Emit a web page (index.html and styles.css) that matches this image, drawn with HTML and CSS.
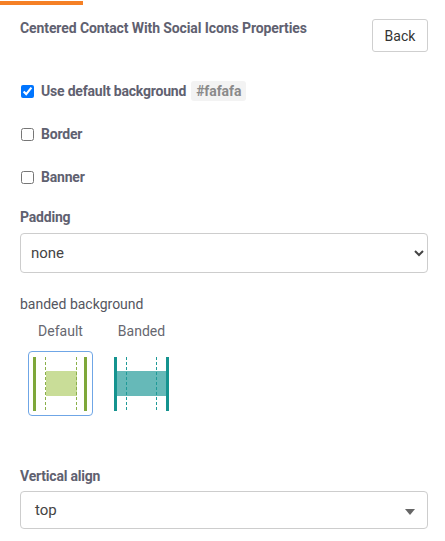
FILE: index.html
```html
<!DOCTYPE html>
<html>
<head>
<meta charset="utf-8">
<link rel="stylesheet" href="styles.css">
</head>
<body>
<div class="accent"></div>
<div class="panel">
  <div class="header">
    <div class="title">Centered Contact With Social Icons Properties</div>
    <button class="back">Back</button>
  </div>

  <label class="check first"><input type="checkbox" checked><span>Use default background</span><code class="chip">#fafafa</code></label>
  <label class="check"><input type="checkbox"><span>Border</span></label>
  <label class="check"><input type="checkbox"><span>Banner</span></label>

  <div class="field-label pad-label">Padding</div>
  <select class="native">
    <option>none</option>
  </select>

  <div class="plain-label">banded background</div>
  <div class="options">
    <div class="option">
      <div class="opt-name">Default</div>
      <div class="opt-box selected">
        <svg width="63" height="63" viewBox="0 0 63 63">
          <rect x="17" y="19" width="31" height="25" fill="#c9dd98"/>
          <rect x="4" y="5" width="3" height="54" fill="#7ea73a"/>
          <rect x="55" y="5" width="3" height="54" fill="#7ea73a"/>
          <line x1="16.5" y1="5" x2="16.5" y2="59" stroke="#8bb04a" stroke-width="1" stroke-dasharray="3 2"/>
          <line x1="47.5" y1="5" x2="47.5" y2="59" stroke="#8bb04a" stroke-width="1" stroke-dasharray="3 2"/>
        </svg>
      </div>
    </div>
    <div class="option">
      <div class="opt-name">Banded</div>
      <div class="opt-box">
        <svg width="63" height="63" viewBox="0 0 63 63">
          <rect x="7" y="19" width="49" height="25" fill="#66b9b8"/>
          <rect x="4" y="5" width="3" height="54" fill="#14938f"/>
          <rect x="56" y="5" width="3" height="54" fill="#14938f"/>
          <line x1="16.5" y1="5" x2="16.5" y2="59" stroke="#1f9a97" stroke-width="1" stroke-dasharray="3 2"/>
          <line x1="46.5" y1="5" x2="46.5" y2="59" stroke="#1f9a97" stroke-width="1" stroke-dasharray="3 2"/>
        </svg>
      </div>
    </div>
  </div>

  <div class="field-label va-label">Vertical align</div>
  <div class="custom-select">
    <span class="value">top</span>
    <svg class="caret" width="10" height="6" viewBox="0 0 10 6"><path d="M0 0 L10 0 L5 6 Z" fill="#666"/></svg>
  </div>
</div>
</body>
</html>
```

FILE: styles.css
```css
html, body {
  margin: 0;
  padding: 0;
  background: #ffffff;
}
body {
  font-family: Roboto, "Liberation Sans", Arial, sans-serif;
  color: #5f6170;
}
.accent {
  width: 83px;
  height: 4px;
  margin-top: 1px;
  background: #f58025;
}
.panel {
  padding: 0 17px 0 20px;
}
.header {
  display: flex;
  justify-content: space-between;
  align-items: flex-start;
  margin-top: 14px;
}
.title {
  font-size: 14px;
  font-weight: 700;
  line-height: 18px;
  color: #5f6170;
  letter-spacing: -0.1px;
}
.back {
  width: 56px;
  height: 33px;
  background: #fff;
  border: 1px solid #cfcfcf;
  border-radius: 3px;
  font-family: Roboto, "Liberation Sans", Arial, sans-serif;
  font-size: 14px;
  color: #333;
  padding: 0;
  margin-right: 0;
}
.check {
  display: flex;
  align-items: center;
  height: 20px;
  margin-top: 23px;
  font-size: 14px;
  font-weight: 700;
  letter-spacing: -0.2px;
}
.check.first {
  margin-top: 29px;
}
.check input {
  width: 13px;
  height: 13px;
  margin: 0 7px 0 1px;
}
.chip {
  margin-left: 5px;
  padding: 2px 5px;
  background: #f3f3f3;
  border-radius: 3px;
  font-family: Roboto, "Liberation Sans", Arial, sans-serif;
  font-size: 14px;
  font-weight: 700;
  color: #8a8a8a;
  letter-spacing: -0.1px;
}
.field-label {
  font-size: 14px;
  font-weight: 700;
  line-height: 20px;
  letter-spacing: -0.2px;
}
.pad-label {
  margin-top: 20px;
}
.native {
  display: block;
  width: 408px;
  height: 40px;
  margin-top: 6px;
  padding: 0 6px;
  background: #fff;
  border: 1px solid #cdcdcd;
  border-radius: 4px;
  font-family: Roboto, "Liberation Sans", Arial, sans-serif;
  font-size: 15px;
  color: #444;
}
.plain-label {
  margin-top: 21px;
  font-size: 14px;
  line-height: 20px;
  color: #555660;
}
.options {
  display: flex;
  margin-top: 7px;
}
.option {
  width: 81px;
  display: flex;
  flex-direction: column;
  align-items: center;
}
.opt-name {
  font-size: 14px;
  line-height: 20px;
  color: #666770;
}
.opt-box {
  width: 63px;
  height: 63px;
  margin-top: 10px;
  border: 1px solid transparent;
  border-radius: 4px;
}
.opt-box svg {
  display: block;
}
.opt-box.selected {
  border-color: #6fa6e6;
}
.va-label {
  margin-top: 50px;
}
.custom-select {
  display: flex;
  align-items: center;
  justify-content: space-between;
  width: 408px;
  height: 38px;
  box-sizing: border-box;
  margin-top: 5px;
  padding: 0 12px 0 14px;
  border: 1px solid #cdcdcd;
  border-radius: 4px;
  font-size: 15px;
  color: #444;
}
.caret {
  display: block;
  margin-top: 4px;
}
```
